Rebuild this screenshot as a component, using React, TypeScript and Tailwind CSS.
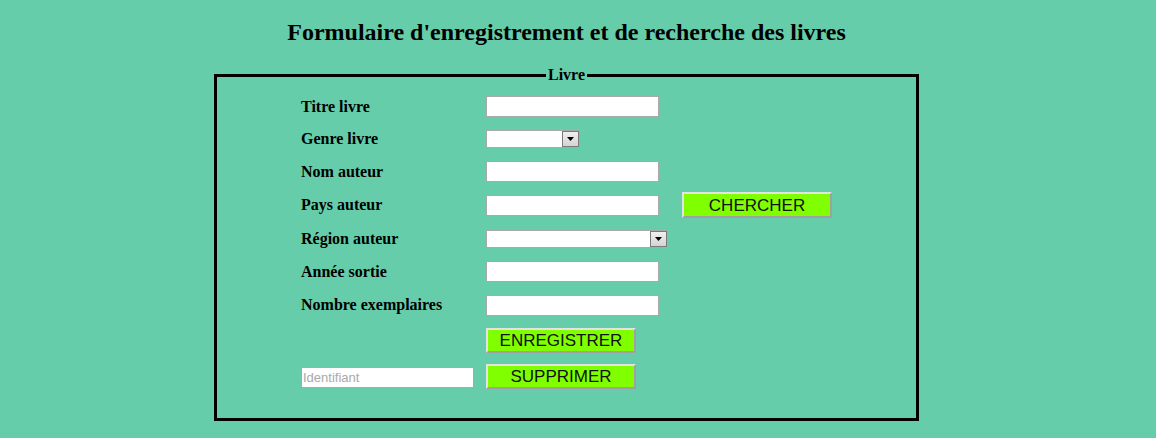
import React from 'react';

function TextBox({ placeholder }: { placeholder?: string }) {
  return (
    <input
      type="text"
      placeholder={placeholder}
      className="w-[173px] h-[21px] border border-[#a9a9a9] bg-white px-[1px] text-[13px] font-['Liberation_Sans',Arial,sans-serif] text-black placeholder:text-[#a9a9a9] outline-none"
    />
  );
}

function SelectBox({ width }: { width: string }) {
  return (
    <div className={`${width} h-[18px] flex border border-[#a9a9a9] bg-white`}>
      <div className="flex-1" />
      <div className="w-[17px] h-full flex items-center justify-center border border-[#7a7a7a] bg-gradient-to-b from-[#f0f0f0] to-[#d4d4d4]">
        <svg width="7" height="4" viewBox="0 0 7 4">
          <path d="M0 0H7L3.5 4Z" fill="#000" />
        </svg>
      </div>
    </div>
  );
}

function GreenButton({ label, className = '' }: { label: string; className?: string }) {
  return (
    <button
      type="button"
      className={`w-[150px] bg-[#7fff00] border-2 border-t-[#e3e3e3] border-l-[#e3e3e3] border-r-[#a0a0a0] border-b-[#a0a0a0] text-[17px] leading-none text-[#111] font-['Liberation_Sans',Arial,sans-serif] ${className}`}
    >
      {label}
    </button>
  );
}

function Row({ label, h, children }: { label?: React.ReactNode; h: string; children: React.ReactNode }) {
  return (
    <div className={`flex items-center ${h}`}>
      <div className="w-[185px] text-[16px] font-bold">{label}</div>
      {children}
    </div>
  );
}

export default function App() {
  return (
    <div className="min-h-screen bg-[#66cdaa] font-['Liberation_Serif','Times_New_Roman',serif] text-black">
      <div className="w-[1133px] pt-[18px]">
        <h2 className="text-center text-[24px] font-bold leading-[28px]">
          Formulaire d'enregistrement et de recherche des livres
        </h2>

        <fieldset className="mt-[20px] ml-[214px] w-[705px] border-[3px] border-black">
          <legend className="mx-auto px-[2px] text-[16px] font-bold leading-[18px]">Livre</legend>

          <div className="pl-[84px] pt-[6px] pb-[23px]">
            <Row label="Titre livre" h="h-[33px]">
              <TextBox />
            </Row>
            <Row label="Genre livre" h="h-[32px]">
              <SelectBox width="w-[94px]" />
            </Row>
            <Row label="Nom auteur" h="h-[33px]">
              <TextBox />
            </Row>
            <Row label="Pays auteur" h="h-[34px]">
              <TextBox />
              <GreenButton label="CHERCHER" className="ml-[23px] h-[26px]" />
            </Row>
            <Row label="Région auteur" h="h-[33px]">
              <SelectBox width="w-[182px]" />
            </Row>
            <Row label="Année sortie" h="h-[33px]">
              <TextBox />
            </Row>
            <Row label="Nombre exemplaires" h="h-[34px]">
              <TextBox />
            </Row>
            <Row h="h-[36px]">
              <GreenButton label="ENREGISTRER" className="h-[25px]" />
            </Row>
            <div className="flex items-center h-[37px]">
              <div className="w-[185px]">
                <TextBox placeholder="Identifiant" />
              </div>
              <GreenButton label="SUPPRIMER" className="h-[25px]" />
            </div>
          </div>
        </fieldset>
      </div>
    </div>
  );
}
